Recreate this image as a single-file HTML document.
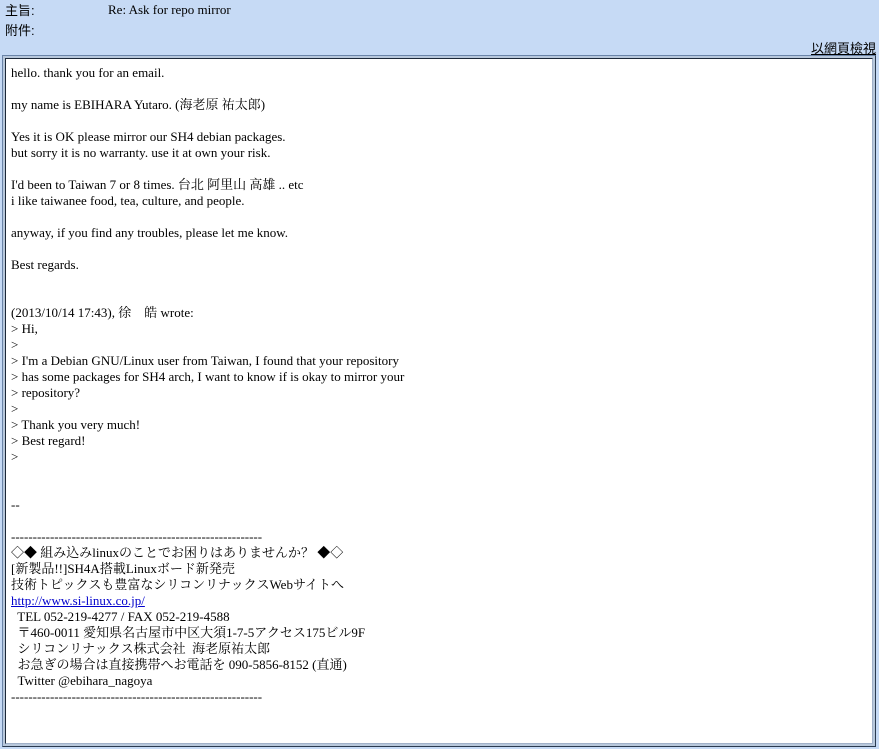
<!DOCTYPE html>
<html><head><meta charset="utf-8"><style>
html,body{margin:0;padding:0;width:879px;height:749px;background:#c6daf5;overflow:hidden}
.hd{position:absolute;font:13px "Liberation Sans","Noto Sans CJK TC",sans-serif;color:#000}
.box{position:absolute;left:2px;top:55px;width:870px;height:688px;border:1px solid #6a84a8;border-right-color:#2a3a50;border-bottom-color:#2a3a50;background:#b8c8dc;padding:1px}
.in{position:absolute;left:2px;top:2px;right:2px;bottom:2px;background:#fff;border:1px solid #1c2838;border-right-color:#a0b0c8;border-bottom-color:#a0b0c8}
pre{margin:0;position:absolute;left:5px;top:6px;font:13px/16px "Liberation Serif","Noto Serif CJK SC","Noto Sans CJK JP",serif;color:#000;white-space:pre}
a{color:#00c}
</style></head><body>
<div class="hd" style="left:5px;top:0px">主旨:</div>
<div class="hd" style="left:108px;top:2px;font-family:'Liberation Serif',serif">Re: Ask for repo mirror</div>
<div class="hd" style="left:5px;top:20px">附件:</div>
<div class="hd" style="left:811px;top:38px;text-decoration:underline">以網頁檢視</div>
<div class="box"><div class="in"><pre>
hello. thank you for an email.

my name is EBIHARA Yutaro. (海老原 祐太郎)

Yes it is OK please mirror our SH4 debian packages.
but sorry it is no warranty. use it at own your risk.

I'd been to Taiwan 7 or 8 times. 台北 阿里山 高雄 .. etc
i like taiwanee food, tea, culture, and people.

anyway, if you find any troubles, please let me know.

Best regards.


(2013/10/14 17:43), 徐　皓 wrote:
&gt; Hi,
&gt;
&gt; I'm a Debian GNU/Linux user from Taiwan, I found that your repository
&gt; has some packages for SH4 arch, I want to know if is okay to mirror your
&gt; repository?
&gt;
&gt; Thank you very much!
&gt; Best regard!
&gt;


--

----------------------------------------------------------
◇◆ 組み込みlinuxのことでお困りはありませんか？ ◆◇
[新製品!!]SH4A搭載Linuxボード新発売
技術トピックスも豊富なシリコンリナックスWebサイトへ
<a href="#">http://www.si-linux.co.jp/</a>
  TEL 052-219-4277 / FAX 052-219-4588
  〒460-0011 愛知県名古屋市中区大須1-7-5アクセス175ビル9F
  シリコンリナックス株式会社  海老原祐太郎
  お急ぎの場合は直接携帯へお電話を 090-5856-8152 (直通)
  Twitter @ebihara_nagoya
----------------------------------------------------------
</pre></div></div>
</body></html>
